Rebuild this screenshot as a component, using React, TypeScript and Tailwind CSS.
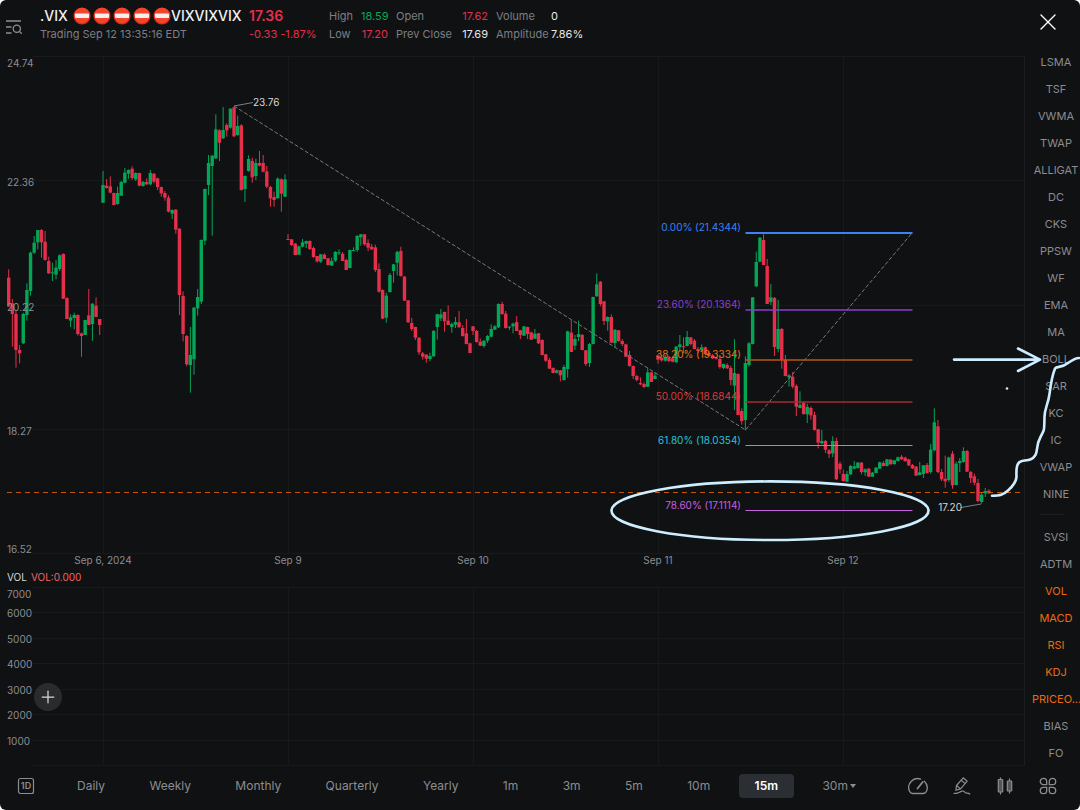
import { X, Plus } from 'lucide-react';

type Candle = [dir: 'u' | 'd', high: number, top: number, bottom: number, low: number];

interface Session {
  x: number;
  y: number;
  candles: Candle[];
}

const STEP = 3.64;
const UP = '#05a557';
const DOWN = '#e52f4b';

// candle values are thirds of a chart unit below the session's y origin
const SESSIONS: Session[] = [
  {
    x: 8.7,
    y: 90,
    candles: [
      ['d', 538, 563, 650, 650], ['d', 627, 640, 672, 770], ['d', 660, 672, 780, 833], ['d', 765, 780, 790, 820],
      ['u', 668, 672, 760, 762], ['u', 580, 600, 675, 692], ['u', 485, 488, 603, 617], ['u', 438, 458, 488, 492],
      ['u', 420, 420, 457, 478], ['d', 417, 420, 457, 503], ['d', 423, 455, 510, 512], ['d', 500, 513, 550, 552],
      ['u', 518, 547, 549, 573], ['u', 510, 533, 554, 568], ['u', 493, 496, 537, 543], ['d', 490, 492, 626, 627],
      ['d', 622, 624, 687, 687], ['u', 673, 682, 692, 711], ['u', 668, 675, 684, 718], ['d', 673, 675, 732, 737],
      ['d', 728, 730, 738, 800], ['u', 690, 690, 735, 735], ['d', 597, 676, 705, 705], ['u', 640, 641, 702, 752],
      ['d', 622, 647, 681, 681], ['d', 687, 687, 705, 735],
    ],
  },
  {
    x: 103,
    y: 90,
    candles: [
      ['u', 243, 285, 338, 338], ['d', 267, 287, 294, 296], ['d', 259, 289, 308, 310], ['d', 308, 309, 345, 345],
      ['u', 290, 309, 342, 344], ['u', 273, 276, 317, 318], ['u', 234, 248, 278, 280], ['u', 238, 240, 251, 266],
      ['d', 229, 236, 264, 270], ['u', 247, 249, 268, 273], ['d', 248, 249, 287, 289], ['u', 273, 276, 288, 290],
      ['d', 265, 276, 283, 285], ['u', 240, 249, 283, 286], ['d', 249, 251, 275, 280], ['d', 263, 265, 291, 300],
      ['d', 290, 291, 310, 320], ['d', 303, 309, 323, 332], ['d', 316, 323, 365, 367], ['u', 358, 360, 371, 387],
      ['d', 357, 359, 419, 431], ['d', 415, 416, 615, 675], ['d', 604, 618, 732, 754], ['d', 735, 738, 823, 829],
      ['u', 711, 795, 825, 908], ['u', 651, 653, 808, 854], ['u', 597, 621, 655, 677], ['u', 448, 450, 635, 642],
      ['u', 296, 297, 452, 465], ['u', 195, 219, 285, 315], ['u', 195, 197, 228, 437], ['u', 73, 118, 205, 207],
      ['d', 118, 121, 158, 213], ['u', 51, 120, 145, 147], ['d', 100, 105, 121, 140], ['u', 55, 56, 113, 116],
      ['d', 50, 52, 139, 141], ['u', 77, 108, 135, 137], ['d', 103, 106, 300, 302], ['u', 256, 258, 297, 336],
      ['u', 196, 207, 243, 245], ['d', 203, 213, 262, 278], ['u', 206, 219, 258, 270], ['d', 183, 219, 227, 229],
      ['d', 195, 219, 245, 247], ['d', 228, 244, 290, 295], ['d', 288, 291, 325, 350], ['d', 305, 321, 330, 350],
      ['u', 262, 266, 325, 325], ['d', 265, 268, 311, 365], ['u', 253, 268, 320, 321],
    ],
  },
  {
    x: 288,
    y: 220,
    candles: [
      ['d', 42, 57, 60, 60], ['d', 57, 58, 75, 78], ['d', 69, 71, 105, 105], ['u', 77, 79, 104, 105],
      ['u', 57, 67, 80, 82], ['u', 62, 63, 71, 84], ['d', 61, 63, 87, 90], ['d', 80, 84, 111, 113],
      ['d', 108, 108, 124, 128], ['u', 102, 103, 125, 129], ['d', 100, 104, 117, 118], ['d', 114, 115, 135, 137],
      ['u', 113, 123, 137, 137], ['u', 93, 96, 122, 126], ['u', 88, 97, 99, 105], ['d', 96, 101, 123, 123],
      ['d', 116, 120, 150, 150], ['u', 89, 90, 144, 145], ['u', 82, 90, 92, 94], ['u', 45, 48, 90, 96],
      ['u', 42, 43, 52, 77], ['d', 42, 43, 73, 77], ['d', 58, 69, 83, 93], ['d', 72, 80, 88, 90],
      ['d', 74, 82, 150, 156], ['d', 130, 147, 215, 218], ['d', 208, 210, 296, 297], ['u', 218, 227, 293, 308],
      ['u', 159, 165, 216, 218], ['u', 132, 133, 153, 188], ['u', 92, 96, 128, 166], ['d', 80, 93, 168, 170],
      ['d', 168, 170, 242, 243], ['d', 240, 241, 307, 309], ['d', 294, 309, 327, 333], ['d', 320, 321, 353, 360],
      ['d', 352, 353, 397, 405], ['d', 396, 400, 410, 419], ['d', 402, 404, 416, 428], ['u', 398, 408, 417, 424],
      ['u', 330, 333, 409, 410], ['u', 281, 283, 321, 359], ['u', 267, 283, 295, 303], ['d', 275, 276, 304, 335],
      ['d', 256, 302, 315, 315], ['u', 308, 312, 321, 338], ['u', 291, 306, 314, 324], ['d', 273, 307, 322, 322],
      ['d', 315, 324, 348, 350], ['d', 297, 340, 372, 373], ['d', 368, 370, 399, 399],
    ],
  },
  {
    x: 473,
    y: 260,
    candles: [
      ['d', 198, 199, 213, 225], ['d', 210, 213, 246, 248], ['d', 235, 245, 257, 258], ['u', 241, 242, 258, 263],
      ['u', 225, 228, 242, 249], ['u', 193, 207, 230, 232], ['u', 195, 199, 209, 210], ['u', 130, 132, 202, 204],
      ['d', 125, 132, 162, 165], ['d', 153, 161, 204, 206], ['u', 198, 200, 202, 210], ['u', 188, 191, 199, 220],
      ['d', 168, 186, 213, 213], ['d', 210, 211, 225, 237], ['u', 198, 199, 227, 228], ['d', 200, 201, 222, 237],
      ['d', 215, 217, 239, 240], ['u', 207, 221, 236, 237], ['d', 219, 220, 250, 252], ['d', 238, 240, 285, 286],
      ['d', 282, 283, 302, 306], ['d', 294, 300, 326, 327], ['d', 322, 324, 339, 340], ['u', 328, 331, 338, 341],
      ['d', 330, 331, 346, 364], ['u', 315, 321, 360, 362], ['u', 212, 214, 327, 353], ['d', 180, 218, 276, 276],
      ['u', 225, 237, 257, 270], ['u', 182, 222, 231, 243], ['d', 222, 225, 270, 271], ['d', 270, 271, 312, 318],
      ['u', 249, 252, 309, 321], ['u', 110, 111, 252, 253], ['u', 40, 73, 109, 110], ['d', 63, 65, 132, 139],
      ['d', 123, 124, 183, 195], ['u', 169, 171, 184, 212], ['d', 163, 171, 248, 249], ['u', 208, 209, 249, 262],
      ['d', 210, 211, 243, 245], ['d', 237, 243, 252, 258], ['d', 251, 253, 290, 291], ['d', 273, 285, 318, 320],
      ['d', 317, 318, 348, 357], ['d', 345, 348, 360, 364], ['d', 352, 369, 373, 375], ['d', 367, 372, 381, 384],
      ['u', 325, 337, 380, 381], ['d', 335, 337, 366, 366], ['u', 337, 347, 357, 358],
    ],
  },
  {
    x: 658,
    y: 215,
    candles: [
      ['d', 418, 421, 434, 446], ['d', 420, 428, 436, 440], ['u', 420, 427, 437, 440], ['d', 423, 427, 438, 442],
      ['d', 426, 430, 440, 442], ['u', 393, 395, 442, 443], ['u', 360, 388, 396, 410], ['d', 367, 394, 397, 415],
      ['u', 348, 366, 393, 394], ['d', 366, 367, 387, 391], ['d', 372, 377, 402, 403], ['d', 396, 402, 408, 414],
      ['u', 388, 397, 405, 411], ['d', 395, 397, 417, 420], ['d', 408, 414, 423, 424], ['d', 417, 421, 430, 432],
      ['d', 425, 428, 431, 434], ['d', 420, 432, 456, 461], ['u', 446, 447, 459, 462], ['d', 445, 450, 460, 462],
      ['d', 452, 459, 495, 511], ['u', 373, 474, 512, 585], ['d', 475, 477, 600, 600], ['d', 580, 588, 618, 629],
      ['u', 424, 444, 615, 646], ['u', 381, 385, 450, 455], ['u', 246, 247, 387, 388], ['u', 110, 141, 214, 216],
      ['u', 66, 68, 140, 142], ['d', 58, 75, 150, 150], ['d', 132, 153, 267, 267], ['u', 207, 247, 261, 270],
      ['d', 246, 249, 396, 423], ['u', 255, 342, 402, 412], ['d', 339, 342, 434, 461], ['d', 420, 434, 483, 484],
      ['u', 477, 481, 487, 515], ['d', 471, 485, 515, 520], ['d', 508, 513, 575, 603], ['u', 529, 570, 579, 580],
      ['d', 560, 564, 597, 599], ['u', 566, 576, 598, 624], ['d', 574, 579, 601, 614], ['d', 590, 600, 645, 647],
      ['d', 642, 643, 683, 700], ['u', 645, 678, 685, 688], ['d', 675, 678, 704, 714], ['d', 702, 706, 717, 729],
      ['u', 664, 678, 715, 726], ['d', 668, 678, 793, 795], ['d', 740, 746, 763, 776],
    ],
  },
  {
    x: 843.3,
    y: 400,
    candles: [
      ['d', 209, 222, 243, 245], ['u', 213, 222, 245, 246], ['u', 195, 198, 223, 224], ['u', 183, 199, 206, 208],
      ['u', 186, 188, 204, 206], ['d', 186, 188, 216, 223], ['u', 205, 208, 217, 228], ['d', 204, 206, 230, 231],
      ['u', 216, 218, 230, 230], ['u', 201, 203, 219, 220], ['u', 185, 187, 206, 206], ['d', 183, 189, 198, 199],
      ['u', 177, 178, 198, 199], ['d', 177, 179, 193, 194], ['u', 180, 181, 192, 194], ['u', 170, 172, 183, 184],
      ['d', 165, 170, 178, 180], ['d', 170, 173, 184, 184], ['d', 177, 178, 196, 198], ['d', 192, 195, 205, 207],
      ['d', 198, 200, 227, 227], ['u', 186, 217, 225, 226], ['u', 195, 196, 222, 234], ['d', 189, 195, 219, 221],
      ['u', 132, 149, 216, 221], ['u', 25, 67, 151, 154], ['d', 60, 79, 216, 220], ['d', 207, 216, 238, 243],
      ['d', 167, 236, 244, 263], ['u', 170, 172, 240, 246], ['d', 153, 161, 256, 266], ['u', 185, 191, 255, 256],
      ['u', 174, 183, 189, 216], ['u', 142, 153, 186, 188], ['d', 150, 153, 215, 216], ['d', 213, 216, 234, 249],
      ['d', 221, 229, 248, 256], ['d', 237, 249, 303, 307], ['u', 279, 284, 306, 311], ['u', 264, 273, 280, 291],
      ['d', 268, 272, 280, 282],
    ],
  },
];

const FIB_LEVELS = [
  { label: '0.00% (21.4344)', y: 233, color: '#3b82f6', width: 2 },
  { label: '23.60% (20.1364)', y: 310, color: '#8b3fd0', width: 1.4 },
  { label: '38.20% (19.3334)', y: 360, color: '#b9590f', text: '#e8710f', width: 1.4 },
  { label: '50.00% (18.6844)', y: 402, color: '#a52a2f', text: '#dc3a3a', width: 1.6 },
  { label: '61.80% (18.0354)', y: 445.5, color: '#22c3dc', width: 1 },
  { label: '78.60% (17.1114)', y: 510.5, color: '#c65fe0', width: 1.2 },
];

const PRICE_AXIS = [
  { label: '24.74', y: 63 },
  { label: '22.36', y: 182 },
  { label: '20.22', y: 307 },
  { label: '18.27', y: 431 },
  { label: '16.52', y: 549 },
];

const VOLUME_AXIS = [
  { label: '7000', y: 594 },
  { label: '6000', y: 613 },
  { label: '5000', y: 639 },
  { label: '4000', y: 664 },
  { label: '3000', y: 690 },
  { label: '2000', y: 715 },
  { label: '1000', y: 741 },
];

const DATES = [
  { label: 'Sep 6, 2024', x: 103 },
  { label: 'Sep 9', x: 288 },
  { label: 'Sep 10', x: 473 },
  { label: 'Sep 11', x: 658 },
  { label: 'Sep 12', x: 843 },
];

const GRID_ROWS = [56, 180, 305, 429, 553, 587, 612, 638, 663, 689, 714, 740, 765];

const MAIN_INDICATORS = [
  'LSMA', 'TSF', 'VWMA', 'TWAP', 'ALLIGAT', 'DC', 'CKS', 'PPSW', 'WF',
  'EMA', 'MA', 'BOLL', 'SAR', 'KC', 'IC', 'VWAP', 'NINE',
];

const SUB_INDICATORS = [
  { name: 'SVSI', active: false },
  { name: 'ADTM', active: false },
  { name: 'VOL', active: true },
  { name: 'MACD', active: true },
  { name: 'RSI', active: true },
  { name: 'KDJ', active: true },
  { name: 'PRICEO...', active: true },
  { name: 'BIAS', active: false },
  { name: 'FO', active: false },
];

const PERIODS = ['Daily', 'Weekly', 'Monthly', 'Quarterly', 'Yearly', '1m', '3m', '5m', '10m', '15m', '30m'];

function NoEntry() {
  return (
    <svg viewBox="0 0 18 18" className="size-[18px]" aria-hidden="true">
      <circle cx="9" cy="9" r="8.6" fill="#d9260f" />
      <circle cx="9" cy="8.6" r="7.8" fill="#f2452c" />
      <rect x="2" y="6.4" width="14" height="4.6" rx="0.8" fill="#fbeeee" />
    </svg>
  );
}

function Header() {
  return (
    <header className="flex h-12 items-start pt-[7px] text-[11px] leading-[18px] text-[#7d7f83]">
      <button aria-label="Search symbols" className="mt-3 ml-1.5 w-[34px] shrink-0 text-[#8d8f93]">
        <svg viewBox="0 0 16 16" className="size-4" fill="none" stroke="currentColor" strokeWidth="1.3">
          <path d="M0 2h15M0 8h5.5M0 14h5.5" />
          <circle cx="10.8" cy="9.8" r="3.6" />
          <path d="m13.4 12.4 2.4 2.4" />
        </svg>
      </button>

      <div className="w-[209px] shrink-0">
        <h1 className="flex items-center text-[14px] leading-[18px] font-medium whitespace-nowrap text-[#f0f1f2]">
          <span className="w-[33px]">.VIX</span>
          <span className="flex gap-0.5">
            <NoEntry /><NoEntry /><NoEntry /><NoEntry /><NoEntry />
          </span>
          <span>VIXVIXVIX</span>
        </h1>
        <p className="whitespace-nowrap">Trading Sep 12 13:35:16 EDT</p>
      </div>

      <div className="w-20 shrink-0 whitespace-nowrap text-[#e52f4b]">
        <p className="text-[14px] leading-[18px] font-semibold">17.36</p>
        <p>-0.33 -1.87%</p>
      </div>

      <dl className="grid grid-cols-[32px_27px_8px_65px_27px_8px_55px_40px] whitespace-nowrap">
        <dt>High</dt>
        <dd className="text-right text-[#05a557]">18.59</dd>
        <dt className="col-start-4">Open</dt>
        <dd className="text-right text-[#e52f4b]">17.62</dd>
        <dt className="col-start-7">Volume</dt>
        <dd className="text-[#e6e7e8]">0</dd>
        <dt>Low</dt>
        <dd className="text-right text-[#e52f4b]">17.20</dd>
        <dt className="col-start-4">Prev Close</dt>
        <dd className="text-right text-[#e6e7e8]">17.69</dd>
        <dt className="col-start-7">Amplitude</dt>
        <dd className="text-[#e6e7e8]">7.86%</dd>
      </dl>

      <button aria-label="Close" className="mr-[18px] ml-auto py-px text-white">
        <X className="size-7" strokeWidth={1.2} />
      </button>
    </header>
  );
}

function Candles() {
  return (
    <g>
      {SESSIONS.map(s =>
        s.candles.map(([dir, high, top, bottom, low], i) => {
          const cx = s.x + i * STEP;
          const fill = dir === 'u' ? UP : DOWN;
          return (
            <g key={`${s.x}-${i}`} fill={fill}>
              <rect x={cx - 0.5} y={s.y + high / 3} width={1} height={(low - high) / 3} />
              <rect x={cx - 1.7} y={s.y + top / 3} width={3.4} height={Math.max(1, (bottom - top) / 3)} />
            </g>
          );
        }),
      )}
    </g>
  );
}

function Chart() {
  return (
    <svg
      viewBox="0 48 1024 718"
      className="pointer-events-none relative z-10 block h-auto w-full overflow-visible text-[10px]"
      role="img"
      aria-label=".VIX 15 minute candles with Fibonacci retracement"
    >
      {/* Grid */}
      <g stroke="#18191b" shapeRendering="crispEdges">
        {GRID_ROWS.map(y => <line key={y} x1={32} x2={1024} y1={y} y2={y} />)}
        {DATES.map(d => <path key={d.x} d={`M${d.x} 56V554M${d.x} 587V766`} />)}
        <path d="M1024 56V766" stroke="#1c1d20" />
      </g>

      <Candles />

      {/* Axis labels */}
      <g fill="#8b8d91">
        {PRICE_AXIS.map(a => <text key={a.label} x={7} y={a.y} dy="0.36em">{a.label}</text>)}
        {VOLUME_AXIS.map(a => <text key={a.label} x={7} y={a.y} dy="0.36em">{a.label}</text>)}
        {DATES.map(d => <text key={d.label} x={d.x} y={560} dy="0.36em" textAnchor="middle">{d.label}</text>)}
      </g>
      <text x={7} y={577} dy="0.36em" fill="#d6d7d9">VOL</text>
      <text x={31} y={577} dy="0.36em" fill="#f26464">VOL:0.000</text>

      {/* High and low markers */}
      <g fill="#d6d7d9">
        <path d="M234 106 253 102.5M961 507.5l20-3.5" stroke="#7d7f83" strokeWidth={1} />
        <text x={253} y={102} dy="0.36em">23.76</text>
        <text x={962} y={507} dy="0.36em" textAnchor="end">17.20</text>
      </g>

      {/* Last price */}
      <path d="M7 492.5H1024" stroke="#c4560c" strokeDasharray="5 4" />

      {/* Fibonacci retracement */}
      <path d="M234 106 745.5 430 912 233" fill="none" stroke="#77797c" strokeDasharray="4 2" />
      {FIB_LEVELS.map(f => (
        <g key={f.label}>
          <line x1={745.5} x2={912.5} y1={f.y} y2={f.y} stroke={f.color} strokeWidth={f.width} />
          <text x={741} y={f.y - 5.5} dy="0.36em" textAnchor="end" fill={f.text ?? f.color}>{f.label}</text>
        </g>
      ))}

      {/* Hand drawn notes */}
      <g fill="none" stroke="#cdeeff" strokeWidth={2.6} strokeLinecap="round" strokeLinejoin="round">
        <ellipse cx={770} cy={510.7} rx={158.5} ry={29.3} />
        <path d="M954 359.6H1040M1018 348.5 1040 359.6 1018 371" />
        <path d="M992 495.7C1000 495.6 1003 495 1008 490.5C1012 487 1016 482 1016.5 477C1016 467 1017 462 1022 461C1028 460 1032 460.5 1035.5 455C1038 450 1036 445 1040.5 437C1045 429 1044 430 1044.5 418C1044 410 1048 405 1049.5 394C1051 382 1052 376 1055 368.5C1057 366 1062 368 1068 363C1073 359.5 1076 358 1079 358" />
      </g>
      <circle cx={1007} cy={388.5} r={1.3} fill="#cdeeff" />
    </svg>
  );
}

function IndicatorList() {
  return (
    <aside className="w-14 shrink-0 pt-px text-[11px] text-[#8b8d91]">
      <ul>
        {MAIN_INDICATORS.map(name => (
          <li key={name}>
            <button className="block h-[27px] w-full pl-2 text-center leading-[27px]">{name}</button>
          </li>
        ))}
      </ul>
      <div className="h-4 px-4 pt-1.5">
        <hr className="border-[#1c1d20]" />
      </div>
      <ul>
        {SUB_INDICATORS.map(item => (
          <li key={item.name}>
            <button
              className={`block h-[27px] w-full pl-2 text-center leading-[27px] ${item.active ? 'text-[#ee6a10]' : ''}`}
            >
              {item.name}
            </button>
          </li>
        ))}
      </ul>
    </aside>
  );
}

function PeriodBar() {
  return (
    <footer className="flex items-start pt-[7px] pb-3 text-[12px] text-[#8b8d91]">
      <button aria-label="Switch to daily" className="ml-[17px] flex h-6 w-11 items-center">
        <svg viewBox="0 0 18 18" className="size-[18px]" fill="none" stroke="currentColor">
          <rect x="1.5" y="1.5" width="15" height="15" rx="2" strokeWidth="1.2" />
          <text x="9" y="12.3" textAnchor="middle" fontSize="9" fontWeight="600" fill="currentColor" stroke="none">1D</text>
        </svg>
      </button>

      <nav className="mr-9 flex flex-1 justify-between">
        {PERIODS.map(p => (
          <button
            key={p}
            className={`flex h-6 items-center rounded-sm px-4 ${p === '15m' ? 'bg-[#2b2e33] font-semibold text-white' : ''}`}
          >
            {p}
            {p === '30m' && (
              <svg viewBox="0 0 6 4" className="ml-0.5 h-1 w-1.5 fill-current"><path d="M0 0h6L3 4z" /></svg>
            )}
          </button>
        ))}
      </nav>

      <div className="flex h-6 items-center gap-6 pr-[22px]">
        <button aria-label="Performance">
          <svg viewBox="0 0 20 20" className="size-5" fill="none" stroke="currentColor" strokeWidth="1.3" strokeLinecap="round">
            <path d="M12.7 3.100a9 9 0 0 0-11.200 12.200q1 2.200 3.200 2.200h10.600q2.200 0 3.200-2.200a9 9 0 0 0-2.200-10" />
            <path d="m9.500 12.500 5.200-6.500" strokeWidth="1.800" />
          </svg>
        </button>
        <button aria-label="Draw">
          <svg viewBox="0 0 20 20" className="size-5" fill="none" stroke="currentColor" strokeWidth="1.2" strokeLinejoin="round" strokeLinecap="round">
            <path d="m4.500 9.500 6.700-7.700 4 3.400-6.700 7.700-4.600 1.400zM9.200 4.200l4 3.400M4.500 9.500l4 3.400" />
            <path d="M2 17.300c4 .8 5-1.300 8-2.200 3-.8 2.500 2.400 5 2 1.200-.2 2 .2 2.700.900" />
          </svg>
        </button>
        <button aria-label="Chart type">
          <svg viewBox="0 0 18 20" className="h-5 w-[18px]" stroke="currentColor" strokeWidth="1.2">
            <path d="M4.500 1.500v17M13.500 2.500v15" />
            <rect x="2.300" y="3.500" width="4.400" height="12.500" rx="0.500" fill="#55575a" />
            <rect x="11.300" y="5" width="4.400" height="10" rx="0.500" fill="#55575a" />
          </svg>
        </button>
        <button aria-label="More tools">
          <svg viewBox="0 0 20 20" className="size-5" fill="none" stroke="currentColor" strokeWidth="1.3">
            <path d="M5.500 2.300a3.200 3.200 0 0 1 3.200 3.200v3.200H5.500a3.200 3.200 0 0 1 0-6.400zM14.500 2.300a3.200 3.200 0 0 1 0 6.400h-3.200V5.500a3.200 3.200 0 0 1 3.200-3.200zM5.500 17.700a3.200 3.200 0 0 1 0-6.400h3.200v3.200a3.200 3.200 0 0 1-3.200 3.200zM14.500 17.700a3.200 3.200 0 0 1-3.200-3.200v-3.200h3.200a3.200 3.200 0 0 1 0 6.400z" />
          </svg>
        </button>
      </div>
    </footer>
  );
}

export default function App() {
  return (
    <div className="min-h-screen bg-white font-['Inter',sans-serif]">
      <div className="flex min-h-screen flex-col overflow-hidden rounded-md bg-[#101113]">
        <Header />
        <div className="flex">
          <main className="relative min-w-0 flex-1">
            <Chart />
            <button
              aria-label="Add indicator"
              className="absolute bottom-14 left-[34px] z-20 flex size-7 items-center justify-center rounded-full bg-[#2a2b2d] text-[#d6d7d9]"
            >
              <Plus className="size-5" strokeWidth={1.5} />
            </button>
          </main>
          <IndicatorList />
        </div>
        <PeriodBar />
      </div>
    </div>
  );
}
